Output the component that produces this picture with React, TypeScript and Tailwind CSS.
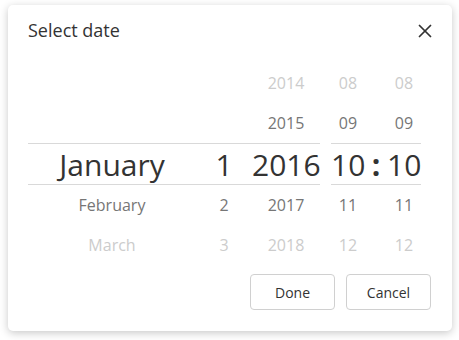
import { X } from 'lucide-react'

type Row = { month: string; day: string; year: string; hour: string; minute: string; tone: 'far' | 'near' | 'sel' }

const rows: Row[] = [
  { month: '', day: '', year: '2014', hour: '08', minute: '08', tone: 'far' },
  { month: '', day: '', year: '2015', hour: '09', minute: '09', tone: 'near' },
  { month: 'January', day: '1', year: '2016', hour: '10', minute: '10', tone: 'sel' },
  { month: 'February', day: '2', year: '2017', hour: '11', minute: '11', tone: 'near' },
  { month: 'March', day: '3', year: '2018', hour: '12', minute: '12', tone: 'far' },
]

const toneClass = {
  far: 'h-10 text-[16px] text-[#cccccc]',
  near: 'h-10 text-[16px] text-[#767676]',
  sel: 'h-[42px] border-y border-[#d9d9d9] text-[30px] text-[#333333]',
}

export default function App() {
  return (
    <div className="h-[340px] w-[459px] bg-white pt-[5px] pl-[8px]" style={{ fontFamily: '"Open Sans", "Noto Sans", sans-serif' }}>
      <div className="flex h-[326px] w-[444px] flex-col rounded-[5px] bg-white shadow-[0_2px_8px_rgba(0,0,0,0.22)]">
        <div className="flex h-[49px] items-center justify-between pl-[20px] pr-[16px] pt-[2px]">
          <span className="text-[18px] text-[#333333]">Select date</span>
          <X size={22} strokeWidth={1.9} className="text-[#333333]" />
        </div>

        <div className="mt-[9px] flex pl-[20px]">
          <div className="flex w-[292px] flex-col">
            {rows.map((r, i) => (
              <div key={i} className={`flex items-center ${toneClass[r.tone]}`}>
                <span className="w-[168px] text-center">{r.month}</span>
                <span className="w-[56px] text-center">{r.day}</span>
                <span className="w-[68px] text-center">{r.year}</span>
              </div>
            ))}
          </div>
          <div className="ml-[11px] flex w-[90px] flex-col">
            {rows.map((r, i) => (
              <div key={i} className={`flex items-center ${toneClass[r.tone]}`}>
                <span className="w-[34px] text-center">{r.hour}</span>
                <span className="w-[22px] text-center font-bold">{r.tone === 'sel' ? ':' : ''}</span>
                <span className="w-[34px] text-center">{r.minute}</span>
              </div>
            ))}
          </div>
        </div>

        <div className="mt-[9px] flex justify-end gap-[11px] pr-[21px]">
          <button className="h-[36px] w-[85px] rounded-[4px] border border-[#d0d0d0] bg-white text-[14px] text-[#333333]">Done</button>
          <button className="h-[36px] w-[85px] rounded-[4px] border border-[#d0d0d0] bg-white text-[14px] text-[#333333]">Cancel</button>
        </div>
      </div>
    </div>
  )
}
